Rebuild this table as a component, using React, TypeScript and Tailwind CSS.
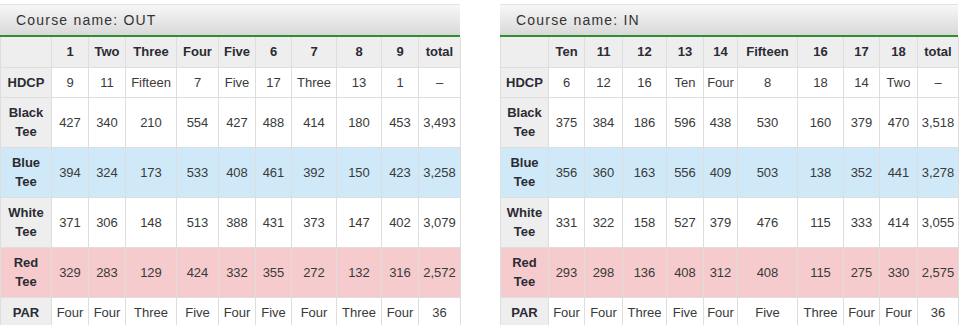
type Course = {
  name: string;
  widths: number[];
  holes: string[];
  hdcp: string[];
  black: string[];
  blue: string[];
  white: string[];
  red: string[];
  par: string[];
};

const courses: Course[] = [
  {
    name: "OUT",
    widths: [51, 37, 37, 51, 42, 37, 36, 45, 45, 37, 42],
    holes: ["1", "Two", "Three", "Four", "Five", "6", "7", "8", "9", "total"],
    hdcp: ["9", "11", "Fifteen", "7", "Five", "17", "Three", "13", "1", "–"],
    black: ["427", "340", "210", "554", "427", "488", "414", "180", "453", "3,493"],
    blue: ["394", "324", "173", "533", "408", "461", "392", "150", "423", "3,258"],
    white: ["371", "306", "148", "513", "388", "431", "373", "147", "402", "3,079"],
    red: ["329", "283", "129", "424", "332", "355", "272", "132", "316", "2,572"],
    par: ["Four", "Four", "Three", "Five", "Four", "Five", "Four", "Three", "Four", "36"],
  },
  {
    name: "IN",
    widths: [48, 36, 38, 44, 37, 34, 60, 46, 36, 38, 41],
    holes: ["Ten", "11", "12", "13", "14", "Fifteen", "16", "17", "18", "total"],
    hdcp: ["6", "12", "16", "Ten", "Four", "8", "18", "14", "Two", "–"],
    black: ["375", "384", "186", "596", "438", "530", "160", "379", "470", "3,518"],
    blue: ["356", "360", "163", "556", "409", "503", "138", "352", "441", "3,278"],
    white: ["331", "322", "158", "527", "379", "476", "115", "333", "414", "3,055"],
    red: ["293", "298", "136", "408", "312", "408", "115", "275", "330", "2,575"],
    par: ["Four", "Four", "Three", "Five", "Four", "Five", "Three", "Four", "Four", "36"],
  },
];

const cell = "border border-[#dedede] px-[3px] text-center align-middle";

const Row = ({
  label,
  values,
  tall,
  rowBg,
  labelBg,
}: {
  label: React.ReactNode;
  values: string[];
  tall?: boolean;
  rowBg: string;
  labelBg: string;
}) => (
  <tr className={tall ? "h-[50px]" : "h-[30px]"}>
    <th className={`${cell} ${labelBg} font-bold text-[#2b2b33]`}>{label}</th>
    {values.map((v, i) => (
      <td key={i} className={`${cell} ${rowBg} text-[#3a3a3a]`}>
        {v}
      </td>
    ))}
  </tr>
);

const CourseTable = ({ course }: { course: Course }) => {
  const total = course.widths.reduce((a, b) => a + b, 0);
  return (
    <div className="flex shrink-0 flex-col" style={{ width: total }}>
      <div className="flex h-[31px] shrink-0 items-center border-t border-[#e2e2e2] bg-gradient-to-b from-[#f7f7f7] to-[#d9d9d9] pl-[16px] text-[14px] tracking-[1.2px] text-[#333]">
        Course name: {course.name}
      </div>
      <div className="h-[2px] shrink-0 bg-[#2f8f2f]" />
      <table className="shrink-0 table-fixed border-collapse text-[13px] leading-[19px]" style={{ width: total }}>
        <colgroup>
          {course.widths.map((w, i) => (
            <col key={i} style={{ width: w }} />
          ))}
        </colgroup>
        <thead>
          <tr className="h-[30px]">
            <th className={`${cell} border-t-0 bg-[#eeeeee]`} />
            {course.holes.map((h, i) => (
              <th key={i} className={`${cell} border-t-0 bg-[#eeeeee] font-bold text-[#2b2b33]`}>
                {h}
              </th>
            ))}
          </tr>
        </thead>
        <tbody>
          <Row label="HDCP" values={course.hdcp} rowBg="bg-white" labelBg="bg-[#eeeeee]" />
          <Row label={<>Black<br />Tee</>} values={course.black} tall rowBg="bg-white" labelBg="bg-[#eeeeee]" />
          <Row label={<>Blue<br />Tee</>} values={course.blue} tall rowBg="bg-[#cfe9f8]" labelBg="bg-[#cfe9f8]" />
          <Row label={<>White<br />Tee</>} values={course.white} tall rowBg="bg-white" labelBg="bg-[#eeeeee]" />
          <Row label={<>Red<br />Tee</>} values={course.red} tall rowBg="bg-[#f6cbce]" labelBg="bg-[#f6cbce]" />
          <Row label="PAR" values={course.par} rowBg="bg-white" labelBg="bg-[#eeeeee]" />
        </tbody>
      </table>
    </div>
  );
}

export default function App() {
  return (
    <div className="flex h-[325px] w-[964px] gap-[40px] overflow-hidden bg-white pt-[4px] font-['Liberation_Sans',Arial,sans-serif]">
      {courses.map((c) => (
        <CourseTable key={c.name} course={c} />
      ))}
    </div>
  );
}
